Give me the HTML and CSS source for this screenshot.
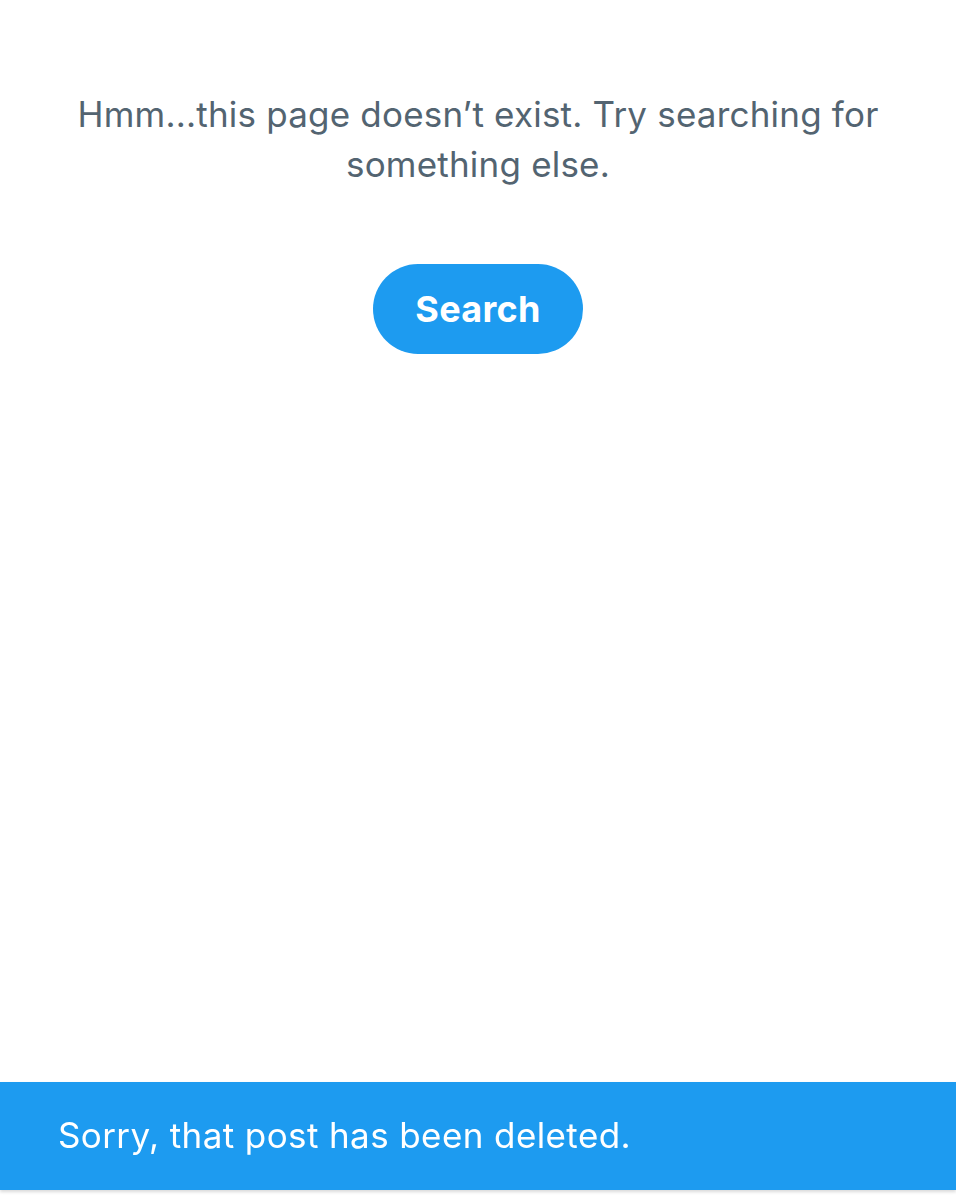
FILE: index.html
```html
<!DOCTYPE html>
<html lang="en">
<head>
<meta charset="utf-8">
<title>Page not found</title>
<link rel="stylesheet" href="styles.css">
</head>
<body>
<main class="empty">
  <p class="message">Hmm...this page doesn’t exist. Try searching for something else.</p>
  <button class="search-btn" type="button">Search</button>
</main>
<div class="toast" role="alert">Sorry, that post has been deleted.</div>
</body>
</html>
```
FILE: styles.css
```css
html, body {
  margin: 0;
  padding: 0;
  background: #ffffff;
}
body {
  width: 956px;
  height: 1200px;
  overflow: hidden;
  font-family: "Inter", "Roboto", "Liberation Sans", sans-serif;
}
.empty {
  display: flex;
  flex-direction: column;
  align-items: center;
  padding: 89px 60px 0;
}
.message {
  margin: 0;
  max-width: 836px;
  text-align: center;
  color: #536471;
  font-size: 35px;
  line-height: 50px;
  letter-spacing: 0.2px;
}
.search-btn {
  margin-top: 75px;
  width: 210px;
  height: 90px;
  padding: 0;
  border: none;
  border-radius: 45px;
  background: #1d9bf0;
  color: #ffffff;
  font-family: inherit;
  font-size: 36px;
  font-weight: 700;
  letter-spacing: 0.3px;
}
.toast {
  position: fixed;
  left: 0;
  right: 0;
  top: 1082px;
  height: 108px;
  box-sizing: border-box;
  padding-left: 58px;
  padding-bottom: 2px;
  display: flex;
  align-items: center;
  background: #1d9bf0;
  color: #ffffff;
  font-size: 35px;
  letter-spacing: 0.4px;
  box-shadow: 0 2px 3px rgba(0, 0, 0, 0.15);
}
```
